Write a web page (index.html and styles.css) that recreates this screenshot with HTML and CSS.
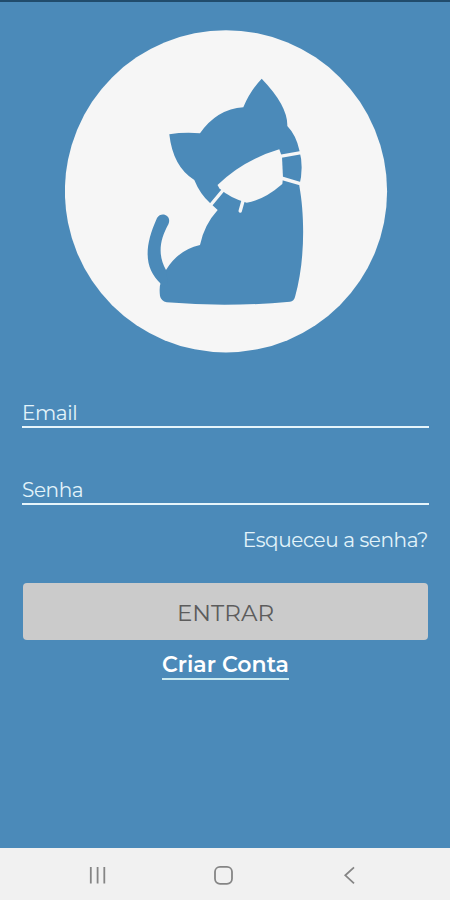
FILE: index.html
```html
<!DOCTYPE html>
<html lang="pt-BR">
<head>
    <meta charset="UTF-8">
    <meta name="viewport" content="width=device-width, initial-scale=1">
    <title>Login</title>
    <link rel="stylesheet" href="styles.css">
</head>
<body>
    <main class="login">
        <svg class="logo" width="323" height="323" viewBox="0 0 323 323" aria-hidden="true">
            <circle class="logo-bg" cx="161" cy="161.3" r="161.1" />
            <!-- head and body -->
            <path class="cat" d="M196.7 48.7 Q185 61 178.3 77.3 Q152 79 135 103.3 Q119 102 104.3 104.3 Q108 137 129.3 150 Q135 164 145 173 L152.7 180 Q139 195 135 215 Q113 220 101 240 L95.7 252.7 Q94 257 95 266 Q96 271 101.7 272.3 Q162 277.5 225 271.7 Q229 271 230 267 C240 232 240 187 234.3 155.7 Q239 137 234.3 120 Q231 105 222.3 96 Q223 76 196.7 48.7 Z" />
            <path class="cat" d="M92 188 C96 181 107 185 103.5 194 C94 211 93 226 101 240 L103 254 H96 C80 239 78 219 92 188 Z" />
            <!-- mask -->
            <path class="mask" d="M214.3 119.3 Q178 130 152.5 155 L154.5 158.5 Q165 168 181.7 172.7 Q199 170 217.3 154 L218 148 L217 127 Z" />
            <path class="strap" d="M215 126.3 L237.5 122.3 M216 148 L236 153.8 M159 159 L144 177" />
            <path class="strap strap-end" d="M178 171 L175.2 181" />
        </svg>

        <form class="form">
            <input class="field" type="text" placeholder="Email" aria-label="Email">
            <input class="field" type="password" placeholder="Senha" aria-label="Senha">
            <a class="forgot">Esqueceu a senha?</a>
            <button class="submit" type="button">ENTRAR</button>
            <a class="signup">Criar Conta</a>
        </form>
    </main>

    <nav class="navbar">
        <svg width="20" height="20" viewBox="0 0 20 20">
            <path d="M3.8 2 V18.5 M10.6 2 V18.5 M17.3 2 V18.5" />
        </svg>
        <svg width="20" height="20" viewBox="0 0 20 20">
            <rect x="2" y="1.8" width="17" height="17" rx="5" />
        </svg>
        <svg width="20" height="20" viewBox="0 0 20 20">
            <path d="M15 2.3 L6.3 10.3 L15 18.3" />
        </svg>
    </nav>
</body>
</html>
```
FILE: styles.css
```css
* { box-sizing: border-box;}

body {
    height: 100vh;
    display: flex;
    flex-direction: column;
    margin: 0;
    overflow: hidden;
    background: #4b8ab9;
    border-top: 2px solid #214c6c;
    font-family: "Montserrat", "Inter", sans-serif;
}

.login {
    flex: 1;
    display: flex;
    flex-direction: column;
    padding: 28px 21px 0 22px;
}

.logo {
    align-self: center;
    margin-left: 2px;
}

.logo-bg,
.mask { fill: #f6f6f6;}

.cat { fill: #4b8ab9;}

.strap {
    fill: none;
    stroke: #f6f6f6;
    stroke-width: 3.4;
}

.strap-end { stroke-linecap: round;}

.form {
    display: flex;
    flex-direction: column;
    padding-top: 43px;
}

.field {
    height: 32px;
    margin: 0 0 45px;
    padding: 3px 0 0;
    border: 0;
    border-bottom: 2px solid #e6f5fb;
    border-radius: 0;
    background: transparent;
    color: #e2f3fa;
    font-family: inherit;
    font-size: 20px;
    letter-spacing: -0.4px;
    outline: none;
}

.field::placeholder {
    color: #e2f3fa;
    opacity: 1;
}

.forgot {
    align-self: flex-end;
    margin-top: -23px;
    margin-right: 1px;
    color: #e2f3fa;
    font-size: 20px;
    line-height: 26px;
    letter-spacing: -0.4px;
}

.submit {
    height: 57px;
    margin: 30px 1px 0;
    padding: 2px 0 0;
    border: 0;
    border-radius: 4px;
    background: #cbcbcb;
    color: #5c5c5c;
    font-family: inherit;
    font-size: 23px;
}

.signup {
    align-self: center;
    margin-top: 11px;
    border-bottom: 2px solid #c9e9f0;
    color: #fff;
    font-size: 22px;
    font-weight: 600;
    line-height: 27px;
}

.navbar {
    height: 52px;
    display: flex;
    align-items: center;
    justify-content: space-between;
    padding: 2px 91px 0 87px;
    background: #f1f1f1;
}

.navbar svg {
    fill: none;
    stroke: #858585;
    stroke-width: 1.8;
}
```
